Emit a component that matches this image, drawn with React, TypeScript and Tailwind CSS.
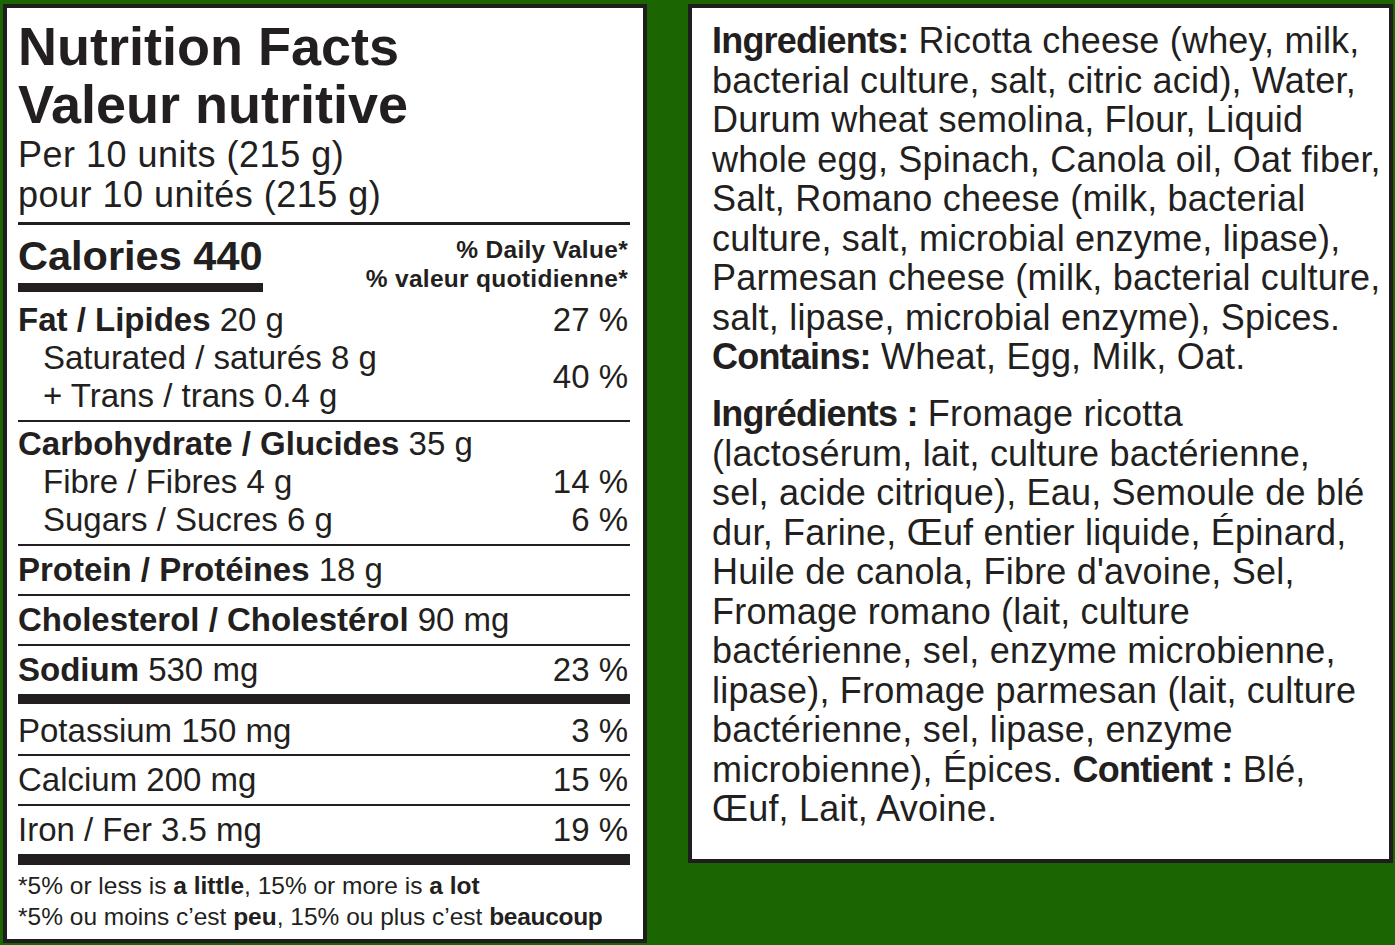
import React from "react";

const INK = "text-[#231f20]";

type Seg = string | { b: string };

const INGREDIENTS_EN: Seg[][] = [
  [{ b: "Ingredients:" }, " Ricotta cheese (whey, milk,"],
  ["bacterial culture, salt, citric acid), Water,"],
  ["Durum wheat semolina, Flour, Liquid"],
  ["whole egg, Spinach, Canola oil, Oat fiber,"],
  ["Salt, Romano cheese (milk, bacterial"],
  ["culture, salt, microbial enzyme, lipase),"],
  ["Parmesan cheese (milk, bacterial culture,"],
  ["salt, lipase, microbial enzyme), Spices."],
  [{ b: "Contains:" }, " Wheat, Egg, Milk, Oat."],
];

const INGREDIENTS_FR: Seg[][] = [
  [{ b: "Ingrédients :" }, " Fromage ricotta"],
  ["(lactosérum, lait, culture bactérienne,"],
  ["sel, acide citrique), Eau, Semoule de blé"],
  ["dur, Farine, Œuf entier liquide, Épinard,"],
  ["Huile de canola, Fibre d'avoine, Sel,"],
  ["Fromage romano (lait, culture"],
  ["bactérienne, sel, enzyme microbienne,"],
  ["lipase), Fromage parmesan (lait, culture"],
  ["bactérienne, sel, lipase, enzyme"],
  ["microbienne), Épices. ", { b: "Contient :" }, " Blé,"],
  ["Œuf, Lait, Avoine."],
];

function Line({ segs }: { segs: Seg[] }) {
  return (
    <div className="whitespace-pre h-[39.5px] leading-[39.5px]">
      {segs.map((s, i) =>
        typeof s === "string" ? (
          <span key={i}>{s}</span>
        ) : (
          <span key={i} className="font-bold tracking-[-0.8px]">
            {s.b}
          </span>
        )
      )}
    </div>
  );
}

function Rule({ thick }: { thick?: boolean }) {
  return <div className={thick ? "h-[10px] bg-[#231f20]" : "h-[2px] bg-[#231f20]"} />;
}

function Row({
  bold,
  rest,
  dv,
  className = "",
}: {
  bold?: string;
  rest?: string;
  dv?: string;
  className?: string;
}) {
  return (
    <div className={"flex justify-between items-center h-[38px] leading-[38px] " + className}>
      <span className="whitespace-pre">
        {bold && <span className="font-bold">{bold}</span>}
        {rest}
      </span>
      {dv && <span className="pr-[2px]">{dv}</span>}
    </div>
  );
}

function NutritionPanel() {
  return (
    <div
      className={
        "w-[644px] h-[939px] bg-white border-4 border-[#1e1e1e] pl-[11px] pr-[13px] pt-[9px] font-['Liberation_Sans',Arial,sans-serif] " +
        INK
      }
    >
      <div className="text-[54px] font-bold leading-[58px]">
        <div>Nutrition Facts</div>
        <div>Valeur nutritive</div>
      </div>
      <div className="mt-[2px] text-[36px] leading-[40px] tracking-[0.5px]">
        <div>Per 10 units (215 g)</div>
        <div>pour 10 unités (215 g)</div>
      </div>
      <div className="mt-[7px] h-[3px] bg-[#231f20]" />

      <div className="flex justify-between items-start pt-[9px]">
        <div>
          <div className="text-[41.5px] font-bold leading-[44px]">Calories 440</div>
          <div className="mt-[5px] w-[245px] h-[9px] bg-[#231f20]" />
        </div>
        <div className="text-right text-[24.5px] font-bold leading-[29px] tracking-[0.3px] pt-px pr-[2px]">
          <div>% Daily Value*</div>
          <div>% valeur quotidienne*</div>
        </div>
      </div>

      <div className="text-[33px]">
        <div className="pt-[8px] pb-[5px]">
          <Row bold="Fat / Lipides" rest=" 20 g" dv="27 %" />
          <div className="flex justify-between items-center">
            <div className="pl-[25px]">
              <Row rest="Saturated / saturés 8 g" />
              <Row rest="+ Trans / trans 0.4 g" />
            </div>
            <span className="pr-[2px]">40 %</span>
          </div>
        </div>
        <Rule />
        <div className="pt-[3px] pb-[5px]">
          <Row bold="Carbohydrate / Glucides" rest=" 35 g" />
          <Row className="pl-[25px]" rest="Fibre / Fibres 4 g" dv="14 %" />
          <Row className="pl-[25px]" rest="Sugars / Sucres 6 g" dv="6 %" />
        </div>
        <Rule />
        <div className="py-[5px]">
          <Row bold="Protein / Protéines" rest=" 18 g" />
        </div>
        <Rule />
        <div className="py-[5px]">
          <Row bold="Cholesterol / Cholestérol" rest=" 90 mg" />
        </div>
        <Rule />
        <div className="py-[5px]">
          <Row bold="Sodium" rest=" 530 mg" dv="23 %" />
        </div>
        <Rule thick />
        <div className="pt-[8px] pb-[4px]">
          <Row rest="Potassium 150 mg" dv="3 %" />
        </div>
        <Rule />
        <div className="py-[5px]">
          <Row rest="Calcium 200 mg" dv="15 %" />
        </div>
        <Rule />
        <div className="py-[5px]">
          <Row rest="Iron / Fer 3.5 mg" dv="19 %" />
        </div>
        <div className="h-[11px] bg-[#231f20]" />
      </div>

      <div className="pt-[5px] text-[24.5px] leading-[31px] whitespace-pre">
        <div>
          *5% or less is <span className="font-bold">a little</span>, 15% or more is{" "}
          <span className="font-bold">a lot</span>
        </div>
        <div>
          *5% ou moins c’est <span className="font-bold">peu</span>, 15% ou plus c’est{" "}
          <span className="font-bold tracking-[-0.3px]">beaucoup</span>
        </div>
      </div>
    </div>
  );
}

function IngredientsPanel() {
  return (
    <div
      className={
        "w-[705px] h-[859px] bg-white border-[4.5px] border-[#1e1e1e] pl-[20px] pt-[13px] text-[36px] tracking-[0.2px] font-['Liberation_Sans',Arial,sans-serif] " +
        INK
      }
    >
      <div>
        {INGREDIENTS_EN.map((l, i) => (
          <Line key={i} segs={l} />
        ))}
      </div>
      <div className="mt-[17.5px]">
        {INGREDIENTS_FR.map((l, i) => (
          <Line key={i} segs={l} />
        ))}
      </div>
    </div>
  );
}

export default function App() {
  return (
    <div className="w-[1395px] h-[945px] bg-[#1b6602] flex items-start gap-[41px] pl-[3px] pt-[4px] overflow-hidden">
      <NutritionPanel />
      <IngredientsPanel />
    </div>
  );
}
